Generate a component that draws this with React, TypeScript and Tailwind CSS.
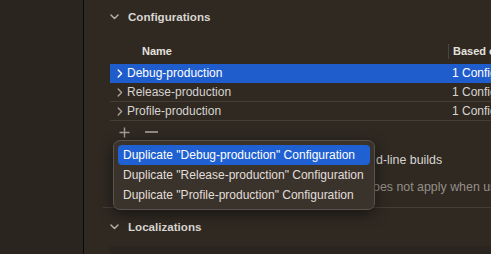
import React from 'react';

const rows = [
  { name: 'Debug-production', based: '1 Configuration Set', selected: true },
  { name: 'Release-production', based: '1 Configuration Set', selected: false },
  { name: 'Profile-production', based: '1 Configuration Set', selected: false },
];

const menuItems = [
  'Duplicate "Debug-production" Configuration',
  'Duplicate "Release-production" Configuration',
  'Duplicate "Profile-production" Configuration',
];

function DownChevron() {
  return (
    <svg width="9" height="6" viewBox="0 0 9 6" className="shrink-0">
      <path d="M1 1l3.5 3.5L8 1" fill="none" stroke="#b3ada6" strokeWidth="1.5" strokeLinecap="round" strokeLinejoin="round" />
    </svg>
  );
}

function RightChevron({ light }: { light?: boolean }) {
  return (
    <svg width="6" height="9" viewBox="0 0 6 9" className="shrink-0">
      <path d="M1.2 1l3.4 3.5L1.2 8" fill="none" stroke={light ? '#ffffff' : '#a8a29b'} strokeWidth="1.4" strokeLinecap="round" strokeLinejoin="round" />
    </svg>
  );
}

function SectionHeader({ title, className }: { title: string; className: string }) {
  return (
    <div className={`flex items-center pl-[26px] gap-[9px] ${className}`}>
      <DownChevron />
      <span className="text-[11.6px] font-bold text-[#d9d5d0]">{title}</span>
    </div>
  );
}

export default function App() {
  return (
    <div className="w-[491px] h-[254px] flex overflow-hidden bg-[#2f2922] font-['Liberation_Sans',Arial,sans-serif]">
      {/* sidebar */}
      <div className="w-[84px] shrink-0 bg-[#2b2520] border-r border-[#0c0a08]" />

      {/* editor pane */}
      <div className="flex-1 relative flex flex-col">
        <SectionHeader title="Configurations" className="h-[34px]" />

        {/* table header */}
        <div className="mt-[9px] ml-[26px] h-[16px] flex items-center">
          <span className="pl-[32px] w-[338px] text-[11px] font-bold text-[#e4e1dd]">Name</span>
          <div className="w-px h-[15px] bg-[#4d453d]" />
          <span className="pl-[4px] text-[11px] font-bold text-[#e4e1dd] whitespace-nowrap">Based on</span>
        </div>

        {/* rows */}
        <div className="mt-[5px] ml-[26px] flex flex-col">
          {rows.map((r) => (
            <div
              key={r.name}
              className={`h-[19px] flex items-center border-b whitespace-nowrap text-[12px] ${
                r.selected ? 'bg-[#1f5dcd] border-[#1f5dcd] text-white' : 'border-[#463e36] text-[#d8d4cf]'
              }`}
            >
              <div className="w-[17px] flex justify-end pr-[4px]">
                <RightChevron light={r.selected} />
              </div>
              <span className="w-[325px]">{r.name}</span>
              <span>{r.based}</span>
            </div>
          ))}
        </div>

        {/* add / remove */}
        <div className="h-[22px] ml-[35px] flex items-center gap-[15px]">
          <svg width="11" height="11" viewBox="0 0 11 11">
            <path d="M5.5 0.5v10M0.5 5.5h10" stroke="#a39d96" strokeWidth="1.4" />
          </svg>
          <div className="w-[13px] h-[2px] bg-[#8f8982]" />
        </div>

        {/* text partly hidden by the menu */}
        <div className="mt-[7px] h-[20px] pl-[292px] flex items-center whitespace-nowrap text-[12.4px] text-[#d8d4cf]">
          <span>d-line builds</span>
        </div>
        <div className="mt-[7px] h-[20px] pl-[289px] flex items-center whitespace-nowrap text-[12.4px] text-[#958f88]">
          <span>oes not apply when us</span>
        </div>

        <div className="mt-[10px] ml-[19px] h-px bg-[#463e36]" />

        <SectionHeader title="Localizations" className="h-[38px]" />
        <div className="ml-[26px] flex-1 bg-[#2b2520]" />

        {/* popup menu */}
        <div className="absolute left-[29px] top-[140px] w-[262px] h-[70px] rounded-[7px] bg-[#3a332c] border border-[#5b534b] shadow-[0_4px_14px_rgba(0,0,0,0.5)] p-[4px] flex flex-col">
          {menuItems.map((m, i) => (
            <div
              key={m}
              className={`h-[20px] shrink-0 flex items-center pl-[5px] rounded-[4px] whitespace-nowrap text-[12px] ${
                i === 0 ? 'bg-[#1f60d2] text-white' : 'text-[#e2ded9]'
              }`}
            >
              {m}
            </div>
          ))}
        </div>
      </div>
    </div>
  );
}
